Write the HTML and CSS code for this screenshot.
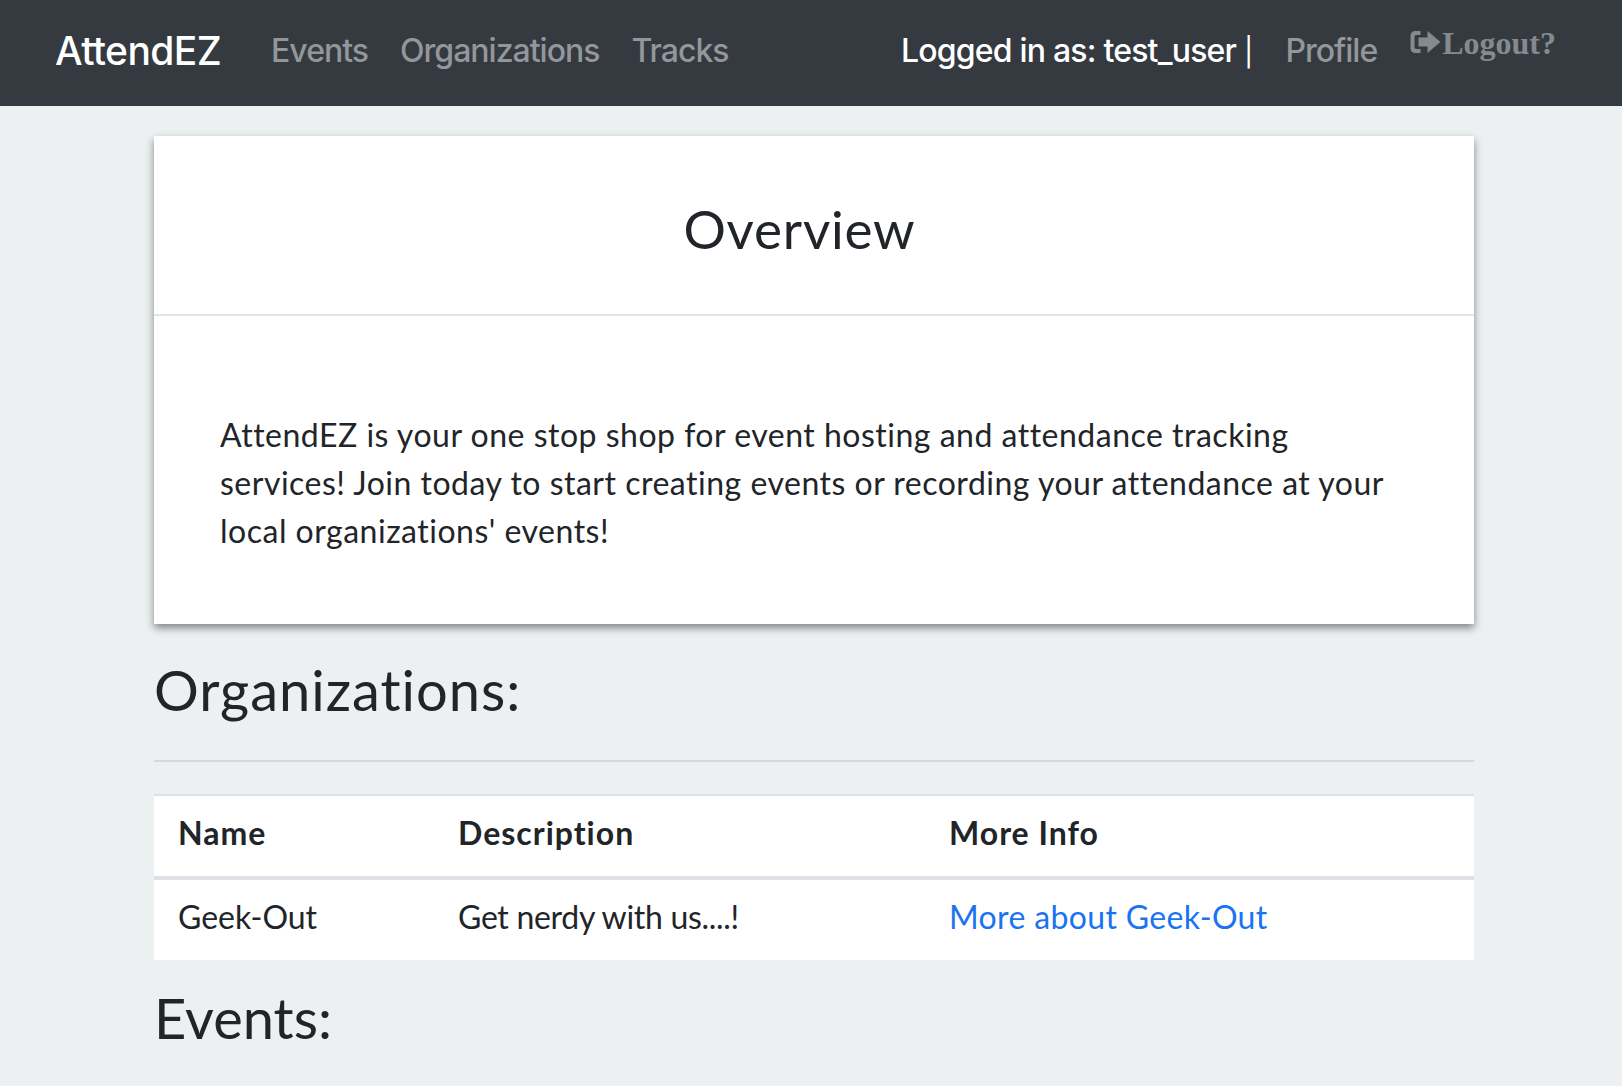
FILE: index.html
```html
<!DOCTYPE html>
<html lang="en">
<head>
    <meta charset="UTF-8">
    <meta name="viewport" content="width=device-width, initial-scale=1.0">
    <title>AttendEZ</title>
    <link rel="stylesheet" href="styles.css">
</head>
<body>
    <nav class="navbar">
        <a class="brand" href="#">AttendEZ</a>
        <a class="nav-link" href="#">Events</a>
        <a class="nav-link" href="#">Organizations</a>
        <a class="nav-link" href="#">Tracks</a>
        <div class="nav-right">
            <span class="logged-in">Logged in as: test_user <span class="pipe">|</span></span>
            <a class="nav-link" href="#">Profile</a>
            <a class="logout" href="#">
                <svg class="logout-icon" viewBox="0 0 32 24" width="33" height="24">
                    <path d="M11 1H6C3 1 1 3 1 6v12c0 3 2 5 5 5h5v-4H7c-1.200 0-2-.8-2-2V7c0-1.200.8-2 2-2h4z" fill="currentColor"/>
                    <path d="M9 7.500h9V1l13 11-13 11v-6.500H9z" fill="currentColor"/>
                </svg>Logout?
            </a>
        </div>
    </nav>

    <main class="container">
        <section class="card">
            <h1 class="card-title">Overview</h1>
            <p class="card-text">AttendEZ is your one stop shop for event hosting and attendance tracking services! Join today to start creating events or recording your attendance at your local organizations' events!</p>
        </section>

        <h2 class="section-title">Organizations:</h2>
        <hr class="divider">

        <table class="org-table">
            <thead>
                <tr>
                    <th class="col-name">Name</th>
                    <th class="col-desc">Description</th>
                    <th>More Info</th>
                </tr>
            </thead>
            <tbody>
                <tr>
                    <td>Geek-Out</td>
                    <td class="desc-cell">Get nerdy with us....!</td>
                    <td><a href="#">More about Geek-Out</a></td>
                </tr>
            </tbody>
        </table>

        <h2 class="section-title events-title">Events:</h2>
    </main>
</body>
</html>
```

FILE: styles.css
```css
html, body {
    height: 1086px;
    overflow: hidden;
}
body {
    margin: 0;
    background-color: #ecf0f1;
    color: #212529;
    font-family: Lato, "Open Sans", sans-serif;
}
a {
    text-decoration: none;
}
.navbar {
    display: flex;
    align-items: center;
    height: 106px;
    padding: 0 66px 6px 55px;
    background-color: #343a40;
    box-sizing: border-box;
    font-family: Inter, sans-serif;
}
.brand {
    margin-right: 50px;
    color: #fff;
    font-size: 39px;
    font-weight: 500;
    letter-spacing: -0.6px;
}
.nav-link {
    margin-right: 32px;
    color: #93969a;
    font-size: 32px;
    font-weight: 500;
    letter-spacing: -1px;
}
.nav-right {
    display: flex;
    align-items: center;
    margin-left: auto;
}
.logged-in {
    margin-right: 33px;
    color: #fff;
    font-size: 32px;
    font-weight: 500;
    letter-spacing: -0.8px;
}
.pipe {
    font-size: 28px;
    font-weight: 400;
}
.logout {
    display: flex;
    align-items: center;
    margin-bottom: 14px;
    color: #858a8f;
    font-family: "Liberation Serif", serif;
    font-size: 32px;
    font-weight: bold;
}
.logout-icon {
    margin-bottom: 3px;
}
.container {
    width: 1320px;
    margin: 0 148px 0 154px;
}
.card {
    margin-top: 30px;
    background: #fff;
    box-shadow: 0 4px 8px rgba(0, 0, 0, 0.45);
}
.card-title {
    height: 180px;
    margin: 0;
    padding-right: 29px;
    border-bottom: 2px solid #e3e5e6;
    box-sizing: border-box;
    font-size: 53px;
    font-weight: 400;
    line-height: 186px;
    text-align: center;
    letter-spacing: 0.8px;
}
.card-text {
    margin: 0;
    padding: 95px 64px 69px 66px;
    font-size: 32px;
    line-height: 48px;
    letter-spacing: 0.5px;
}
.section-title {
    margin: 34px 0 0;
    font-size: 56px;
    font-weight: 400;
    line-height: 64px;
    letter-spacing: 1px;
}
.divider {
    margin: 38px 0 32px;
    border: 0;
    border-top: 2px solid #d5d9da;
}
.org-table {
    width: 100%;
    border-collapse: collapse;
    background: #fff;
    font-size: 32px;
    line-height: 32px;
}
.org-table th, .org-table td {
    padding: 21px 24px 27px;
    text-align: left;
}
.org-table th {
    border-top: 2px solid #dee2e6;
    border-bottom: 4px solid #dee2e6;
    letter-spacing: 1px;
}
.col-name {
    width: 232px;
}
.col-desc {
    width: 443px;
}
.desc-cell {
    letter-spacing: -0.3px;
}
.org-table a {
    color: #1a73f0;
    letter-spacing: 0.35px;
}
.events-title {
    margin-top: 26px;
    letter-spacing: 0;
}
```
